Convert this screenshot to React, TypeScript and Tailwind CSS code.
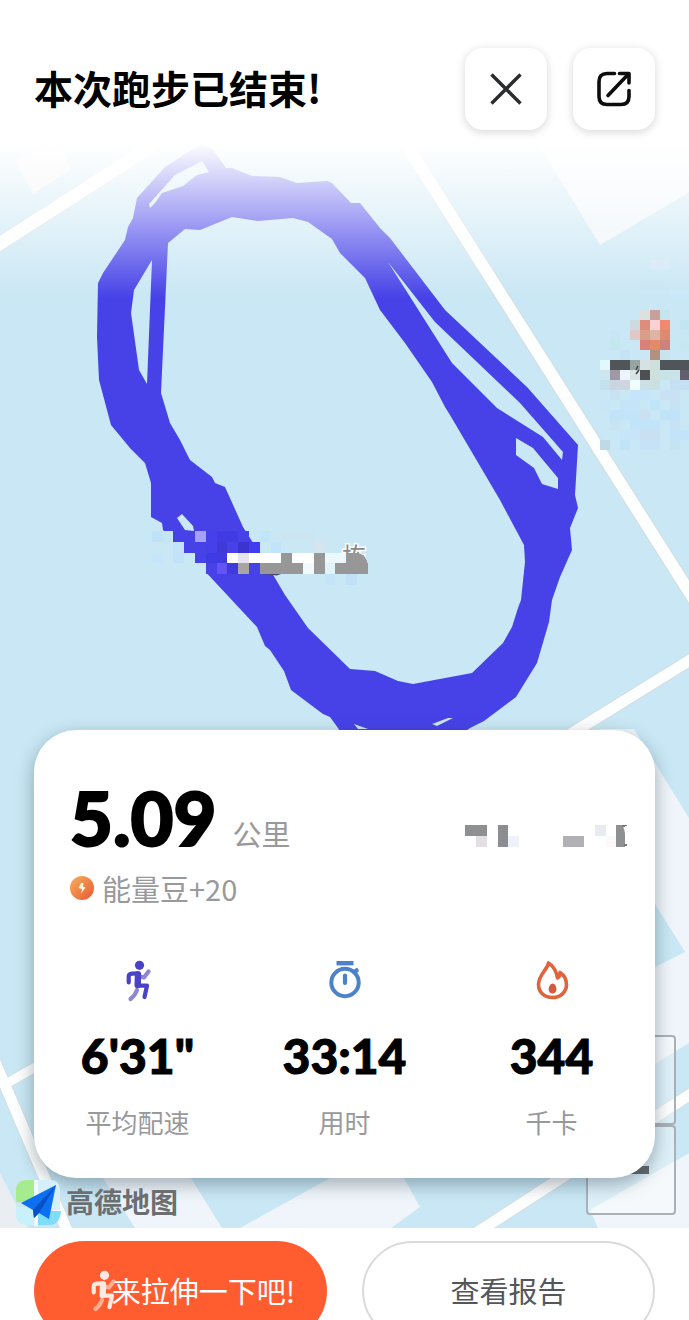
import React from 'react';

const TRACK = '#4642e8';

const outline =
  'M193 149 L202 145 L212 148 L226 168 L232 168 L252 176 L280 177 L297 183 L327 181 L332 183 L351 203 L360 203 L380 228 L390 238 L445 310 L527 387 L578 445 L575 495 L578 508 L570 528 L572 550 L560 577 L552 600 L549 622 L537 663 L516 697 L484 721 L470 728 L440 750 L350 750 L338 728 L330 717 L323 714 L291 690 L284 671 L270 650 L265 646 L257 627 L202 568 L163 530 L162 523 L151 517 L151 483 L145 463 L130 448 L111 425 L99 380 L97 337 L98 283 L103 273 L125 240 L128 227 L133 218 L137 198 L165 167 Z';

const holes = [
  'M232 217 L200 230 L185 229 L168 243 L161 393 L170 423 L180 440 L190 460 L212 477 L215 483 L225 487 L243 527 L272 573 L285 595 L308 628 L350 669 L375 671 L398 681 L413 684 L472 673 L503 643 L512 627 L518 608 L521 600 L525 562 L524 545 L500 500 L450 415 L445 407 L432 382 L405 343 L380 310 L365 278 L340 253 L332 239 L308 222 L293 218 L258 221 Z',
  'M202 161 L209 172 L197 175 L183 186 L162 193 L155 203 L150 208 L149 204 L175 175 Z',
  'M152 260 L147 384 L139 370 L131 313 L134 290 Z',
  'M388 262 L435 322 L520 403 L563 452 L562 460 L543 437 L497 408 L452 363 Z',
  'M516 438 L533 448 L558 478 L558 489 L542 484 L534 468 L516 455 Z',
  'M177 518 L182 514 L193 526 L194 531 L185 530 Z',
  'M432 724 L448 718 L453 718 L437 726 Z',
  'M354 724 L368 729 L358 729 Z',
];

const roads = [
  { d: 'M-10 250 L160 141', w: 13 },
  { d: 'M397 130 L700 609', w: 12 },
  { d: 'M540 753 L700 654', w: 11 },
  { d: 'M470 1237 L700 1088', w: 11 },
  { d: 'M4 1085 L60 1053', w: 9 },
  { d: 'M-10 1050 L72 1242', w: 11 },
];

const blocks = [
  '530,130 600,245 700,186 700,130',
  '634,729 689,818 689,1043 620,1085 620,985 685,952 640,880 600,729',
  '103,1178 70,1120 155,1120 222,1228 135,1228',
  '240,1228 330,1178 380,1140 405,1180 420,1207 391,1228',
  '590,1210 689,1153 689,1228 598,1228',
];

// [column, row, colour, columns wide]
type Cell = [number, number, string, number?];

const labelCells: Cell[] = [
  [0, 0, '#c0e2f8'], [1, 0, '#c5e6f5'], [2, 0, '#4642e8', 2], [4, 0, '#a5a0f8'], [5, 0, '#4440ea'], [6, 0, '#423be4', 2], [8, 0, '#4642e8'],
  [10, 0, '#c3e5f9'], [12, 0, '#cbe6f2', 3],
  [2, 1, '#c3e3fb'], [3, 1, '#4642e8', 2], [5, 1, '#4440ea'], [6, 1, '#403ad9'], [7, 1, '#4642e8'], [8, 1, '#3b34cf'], [9, 1, '#403df0'],
  [11, 1, '#c2e4f8'], [15, 1, '#d5e5ee'],
  [0, 2, '#c5e6fa'], [2, 2, '#c2e2fa'], [3, 2, '#c9e9f6'], [4, 2, '#4642e8'], [5, 2, '#3f3be2', 2], [7, 2, '#ffffff'], [8, 2, '#e6e3ec'], [9, 2, '#ffffff', 3],
  [12, 2, '#979797'], [13, 2, '#ffffff', 2], [15, 2, '#979797'], [16, 2, '#edf8fe', 2],
  [4, 3, '#c9e7f4'], [5, 3, '#4642e8'], [6, 3, '#6355f3'], [7, 3, '#4039dc'], [8, 3, '#a8a4a2'], [9, 3, '#4642e8'], [10, 3, '#979797', 4],
  [14, 3, '#f2fafe'], [15, 3, '#979797'], [16, 3, '#e2f3fc'], [17, 3, '#979797', 3],
  [16, 4, '#c4e4f7'], [18, 4, '#c0e1f8'],
];

const pinCells: Cell[] = [
  [5, -5, '#d2e6f5', 2], [8, -5, '#cde5f5'], [4, -3, '#cae5f6', 3], [7, -2, '#c9e8f8', 2],
  [4, 0, '#dbe1e0'], [5, 0, '#c8a09b'], [6, 0, '#c5e5ec'],
  [3, 1, '#cbdbe0'], [4, 1, '#de8c7b'], [5, 1, '#f8d1d6'], [6, 1, '#f18870'], [8, 1, '#c2e6f1'],
  [1, 2, '#c8e5f5'], [3, 2, '#e0c8c8'], [4, 2, '#d89e8a'], [5, 2, '#deb4a7'], [6, 2, '#de8a70'],
  [1, 3, '#c3e7ee'], [4, 3, '#d9807a'], [5, 3, '#e38a66'], [6, 3, '#cd837b'], [8, 3, '#c5e7f0'],
  [2, 4, '#c5e3f4'], [5, 4, '#b29180'], [6, 4, '#c9e4ec'],
  [0, 5, '#e2f8ff'], [1, 5, '#50555a', 2], [3, 5, '#98a4a4'], [4, 5, '#d5e1e2'], [5, 5, '#cde0dd'], [6, 5, '#50555a', 3],
  [0, 6, '#cde5ee'], [1, 6, '#9f98a5'], [2, 6, '#ecf5fe'], [3, 6, '#d8e3e6'], [4, 6, '#4c5053'], [5, 6, '#cde0dc'], [6, 6, '#c9e3e9', 2], [8, 6, '#645f6c'],
  [0, 7, '#c6e1ee'], [1, 7, '#c9d6e2'], [2, 7, '#ced5e0'], [3, 7, '#effeff'], [4, 7, '#cbdfe5'], [5, 7, '#ccdfe0'], [7, 7, '#c5e0f3', 2],
  [1, 8, '#c8e2f4'], [3, 8, '#c6e5fa', 2], [6, 8, '#c8e1f5', 2],
  [0, 9, '#c7e6f8'], [2, 9, '#c4e4f7', 2], [5, 9, '#bfe5f8'], [7, 9, '#c9e2f3'],
  [1, 10, '#c2e4f8', 3], [4, 10, '#cbe1f1'], [6, 10, '#c1e3f8', 2],
  [1, 11, '#c8e4f2'], [3, 11, '#c1e4f9', 3], [7, 11, '#c7e1f6'],
  [2, 12, '#c7e4f8', 2], [4, 12, '#c9e0f2', 2], [7, 12, '#c2e4f8', 2],
  [0, 13, '#c0d9e6'], [2, 13, '#c1e3f8'], [4, 13, '#c5e2f6', 2], [7, 13, '#c4e4f4'],
];

function Mosaic({ cells, x, y, size }: { cells: Cell[]; x: number; y: number; size: number }) {
  return (
    <g shapeRendering="crispEdges">
      {cells.map(([col, row, fill, span = 1], idx) => (
        <rect key={idx} x={x + col * size} y={y + row * size} width={span * size} height={size} fill={fill} />
      ))}
    </g>
  );
}

function RouteMap() {
  return (
    <svg
      className="absolute inset-0 h-full w-full"
      viewBox="0 0 689 1228"
      preserveAspectRatio="xMidYMin slice"
      role="img"
      aria-label="跑步轨迹"
    >
      <defs>
        <linearGradient id="fade" gradientUnits="userSpaceOnUse" x1="0" y1="142" x2="0" y2="298">
          <stop offset="0" stopColor="#fff" />
          <stop offset="1" stopColor="#fff" stopOpacity="0" />
        </linearGradient>
      </defs>
      <rect width="689" height="1228" fill="#c9e7f4" />
      {blocks.map((points) => (
        <polygon key={points} points={points} fill="#eff5fa" />
      ))}
      <polygon points="15,160 33,194 70,170 60,140" fill="#f3eff4" />
      <polygon points="0,1173 28,1228 0,1228" fill="#eaedf2" />
      {roads.map((road) => (
        <path key={road.d} d={road.d} stroke="#d3dde1" strokeWidth={road.w + 2} />
      ))}
      {roads.map((road) => (
        <path key={road.d} d={road.d} stroke="#fdfefe" strokeWidth={road.w} />
      ))}

      <path d={[outline, ...holes].join(' ')} fill={TRACK} fillRule="evenodd" />

      {/* 楼栋标注 */}
      <text
        x="342"
        y="565"
        fontSize="24"
        fill="#8a8a8a"
        stroke="#fff"
        strokeWidth="3"
        paintOrder="stroke"
        className="font-['Noto_Sans_CJK_SC',sans-serif]"
      >
        栋
      </text>
      <path d="M262 574 h19 l-4 1.500 z" fill="#4a4a68" />
      <Mosaic cells={labelCells} x={151.700} y={531} size={10.800} />
      <path d="M346 553 h12 q9 2 9.500 12 h-21.500 z" fill="#979797" />

      <Mosaic cells={pinCells} x={600} y={310} size={10} />
      <path d="M638 366 l-2 4 m3 0 l-3 4" stroke="#3c4144" strokeWidth="1.500" />
      <rect width="689" height="300" fill="url(#fade)" />
    </svg>
  );
}

function Runner({ color, faded }: { color: string; faded: string }) {
  return (
    <svg width="26" height="42" viewBox="0 0 26 42" fill="none" strokeLinecap="round" strokeLinejoin="round" aria-hidden="true">
      <g stroke={faded} strokeWidth="4.200">
        <path d="M17 17 L19 17.500 L23.500 11.500" />
        <path d="M12 30 Q10.500 35 5.500 39" />
      </g>
      <circle cx="14.500" cy="5.300" r="4.600" fill={color} />
      <g stroke={color} strokeWidth="4.200">
        <path d="M3.700 22.500 V16.500 Q3.700 14 7 13.700 L13.500 13.300" />
        <path d="M13 14.500 L12.700 25" strokeWidth="6.400" />
        <path d="M12.500 25.700 H22 L19.500 37" />
      </g>
    </svg>
  );
}

function Timer() {
  return (
    <svg width="34" height="42" viewBox="0 0 34 42" fill="none" stroke="#4c82cb" strokeLinecap="round" aria-hidden="true">
      <path d="M8.500 3.200 H25.500" strokeWidth="4.400" strokeLinecap="butt" />
      <circle cx="17" cy="22.500" r="13.700" strokeWidth="4" />
      <path d="M17 15.500 V23" strokeWidth="4.200" />
      <path d="M26.500 12 L28.500 10.500" strokeWidth="4.500" />
    </svg>
  );
}

function Flame() {
  return (
    <svg width="34" height="42" viewBox="0 0 34 42" fill="none" stroke="#e0633c" strokeLinejoin="round" aria-hidden="true">
      <path
        d="M13.500 3 C12 10 3.500 15 3.500 24.500 C3.500 32.500 9.500 37.500 17.500 37.500 C25.500 37.500 31.500 32 31.500 24.500 C31.500 19.500 29.500 15.500 25 12.500 C25 15 24.500 17 22.500 18 C21.500 12 18.500 6 13.500 3 Z"
        strokeWidth="3.600"
      />
      <path d="M17.500 23.500 C20 23.500 21.500 27 21.500 29.500 C21.300 32 19.500 33.500 17.500 33.500 C15.500 33.500 13.800 32 13.700 29.500 C13.600 27 15.500 23.500 17.500 23.500 Z" fill="#d8583a" stroke="none" />
    </svg>
  );
}

function AmapLogo() {
  return (
    <svg width="46" height="46" viewBox="0 0 46 46" aria-hidden="true">
      <path d="M11 0 H19 V22 H0 V11 Q0 0 11 0 Z" fill="#a4ec8d" />
      <path d="M22 0 H34 Q44 0 44 11 V30 H22 Z" fill="#d5effb" />
      <path d="M0 27 H18 V45 H11 Q0 45 0 34 Z" fill="#c8f1fb" />
      <path d="M20 31 H45 Q44 45 33 45 H20 Z" fill="#7fdcfa" />
      <path d="M18 0 H22 V46 H18 Z" fill="#eefaff" />
      <path d="M40 5 L5 23 L17 30 L18 38 L23 33 L33 39 Z" fill="#0d6ff2" />
      <path d="M40 5 L17 30 L18 38 L23 33 Z" fill="#0650c8" />
    </svg>
  );
}

function HiddenDate() {
  return (
    <svg width="164" height="22" viewBox="0 0 164 22" shapeRendering="crispEdges" aria-hidden="true">
      <path d="M0 0 H22 V11 H0 Z" fill="#8e9091" />
      <path d="M11 11 H22 V22 H11 Z" fill="#e3dfe2" />
      <path d="M33 0 H43 V22 H33 Z" fill="#8b8d91" />
      <path d="M43 11 H54 V22 H43 Z" fill="#f0f2fb" />
      <path d="M98 11 H119 V22 H98 Z" fill="#b1b0b4" />
      <path d="M130 0 H141 V11 H130 Z" fill="#e8ecf1" />
      <path d="M141 11 H151 V22 H141 Z" fill="#fdf8fa" />
      <path d="M151 0 H157 Q160 4 160 11 V22 H151 Z" fill="#8e9091" shapeRendering="auto" />
      <path d="M157 1 L162 0 M159 20 H162" stroke="#77797c" strokeWidth="2" />
    </svg>
  );
}

const stats = [
  { icon: <Runner color="#4a43c6" faded="#8e86d2" />, value: '6\'31"', label: '平均配速' },
  { icon: <Timer />, value: '33:14', label: '用时' },
  { icon: <Flame />, value: '344', label: '千卡' },
];

const iconButton =
  'flex size-[82px] items-center justify-center rounded-[18px] bg-white shadow-[0_2px_10px_rgba(0,0,0,0.16)]';

export default function App() {
  return (
    <div className="flex h-screen flex-col overflow-hidden bg-white font-['Noto_Sans_CJK_SC',sans-serif]">
      <main className="relative flex flex-1 flex-col overflow-hidden">
        <RouteMap />

        {/* 地图缩放 */}
        <div className="absolute right-[13px] bottom-[13px] flex flex-col">
          <button aria-label="放大" className="flex size-[90px] items-center justify-center rounded-sm border-2 border-[#a9b1b6] bg-white/40">
            <span className="h-2 w-9 bg-[#65686c]" />
          </button>
          <button aria-label="缩小" className="flex size-[90px] items-center justify-center rounded-sm border-2 border-[#a9b1b6] bg-white/40">
            <span className="h-2 w-9 bg-[#65686c]" />
          </button>
        </div>

        <header className="relative flex items-center justify-between px-[34px] pt-12">
          <h1 className="pb-1 text-[39px] leading-[48px] font-bold text-black">本次跑步已结束!</h1>
          <div className="flex gap-[26px]">
            <button aria-label="关闭" className={iconButton}>
              <svg width="36" height="36" viewBox="0 0 36 36" fill="none" stroke="#2a2c2e" strokeWidth="3.400" aria-hidden="true">
                <path d="M3.500 3.500 L32.500 32.500 M32.500 3.500 L3.500 32.500" />
              </svg>
            </button>
            <button aria-label="分享" className={iconButton}>
              <svg width="36" height="36" viewBox="0 0 36 36" fill="none" stroke="#0d0d0d" strokeWidth="3.600" strokeLinecap="round" strokeLinejoin="round" aria-hidden="true">
                <path d="M18.500 2.500 H11 Q3 2.500 3 10.500 V25.500 Q3 33.500 11 33.500 H25 Q33 33.500 33 25.500 V19.500" />
                <path d="M23.500 2.500 H33 V12" />
                <path d="M32 3.500 L12 24.500" />
              </svg>
            </button>
          </div>
        </header>

        <section className="relative mx-[34px] mt-auto rounded-[42px] bg-white pt-12 pb-10 shadow-[0_6px_18px_rgba(40,60,75,0.4)]">
          <div className="flex items-center justify-between pr-[26px] pl-9">
            <p className="flex items-baseline gap-4">
              <span className="font-['Lato','Open_Sans',sans-serif] text-[74px] leading-[80px] font-black text-black [-webkit-text-stroke:2px_black]">5.09</span>
              <span className="text-[29px] leading-10 text-[#98999b]">公里</span>
            </p>
            <div className="pt-9">
              <HiddenDate />
            </div>
          </div>
          <p className="mt-[10px] flex items-center gap-2 pl-9 text-[29px] leading-10 text-[#98999b]">
            <svg width="24" height="24" viewBox="0 0 24 24" aria-hidden="true">
              <defs>
                <linearGradient id="bean" x1="0" y1="0" x2="1" y2="1">
                  <stop offset="0" stopColor="#f7b15a" />
                  <stop offset="1" stopColor="#ea5635" />
                </linearGradient>
              </defs>
              <circle cx="12" cy="12" r="12" fill="url(#bean)" />
              <path d="M11 7 L8.500 12 L12 13 L11 17.500 L15.500 11.500 L13 10.500 L13.500 7 Z" fill="#fff3dc" />
            </svg>
            能量豆+20
          </p>

          <div className="mt-[52px] grid grid-cols-3">
            {stats.map((stat) => (
              <div key={stat.label} className="flex flex-col items-center">
                {stat.icon}
                <span className="mt-[30px] font-['Lato','Open_Sans',sans-serif] text-[48px] leading-[48px] font-black text-black [-webkit-text-stroke:1px_black]">{stat.value}</span>
                <span className="mt-[26px] text-[26px] leading-8 text-[#98999b]">{stat.label}</span>
              </div>
            ))}
          </div>
        </section>

        <div className="relative flex h-[50px] items-center gap-1 px-4">
          <AmapLogo />
          <span className="pb-1 text-[28px] leading-8 font-bold text-[#6c6f72]">高德地图</span>
        </div>
      </main>

      <footer className="grid h-[92px] shrink-0 grid-cols-2 items-start gap-[35px] bg-white px-[34px] pt-[13px]">
        <button className="flex h-[100px] items-center justify-center rounded-full bg-[#ff5c30] pl-6 text-[29px] text-white">
          <Runner color="#ffe9e0" faded="#ffae94" />
          <span className="-ml-1">来拉伸一下吧!</span>
        </button>
        <button className="flex h-[100px] items-center justify-center rounded-full border-2 border-[#dadadc] bg-white text-[29px] text-[#54565a]">
          查看报告
        </button>
      </footer>
    </div>
  );
}
